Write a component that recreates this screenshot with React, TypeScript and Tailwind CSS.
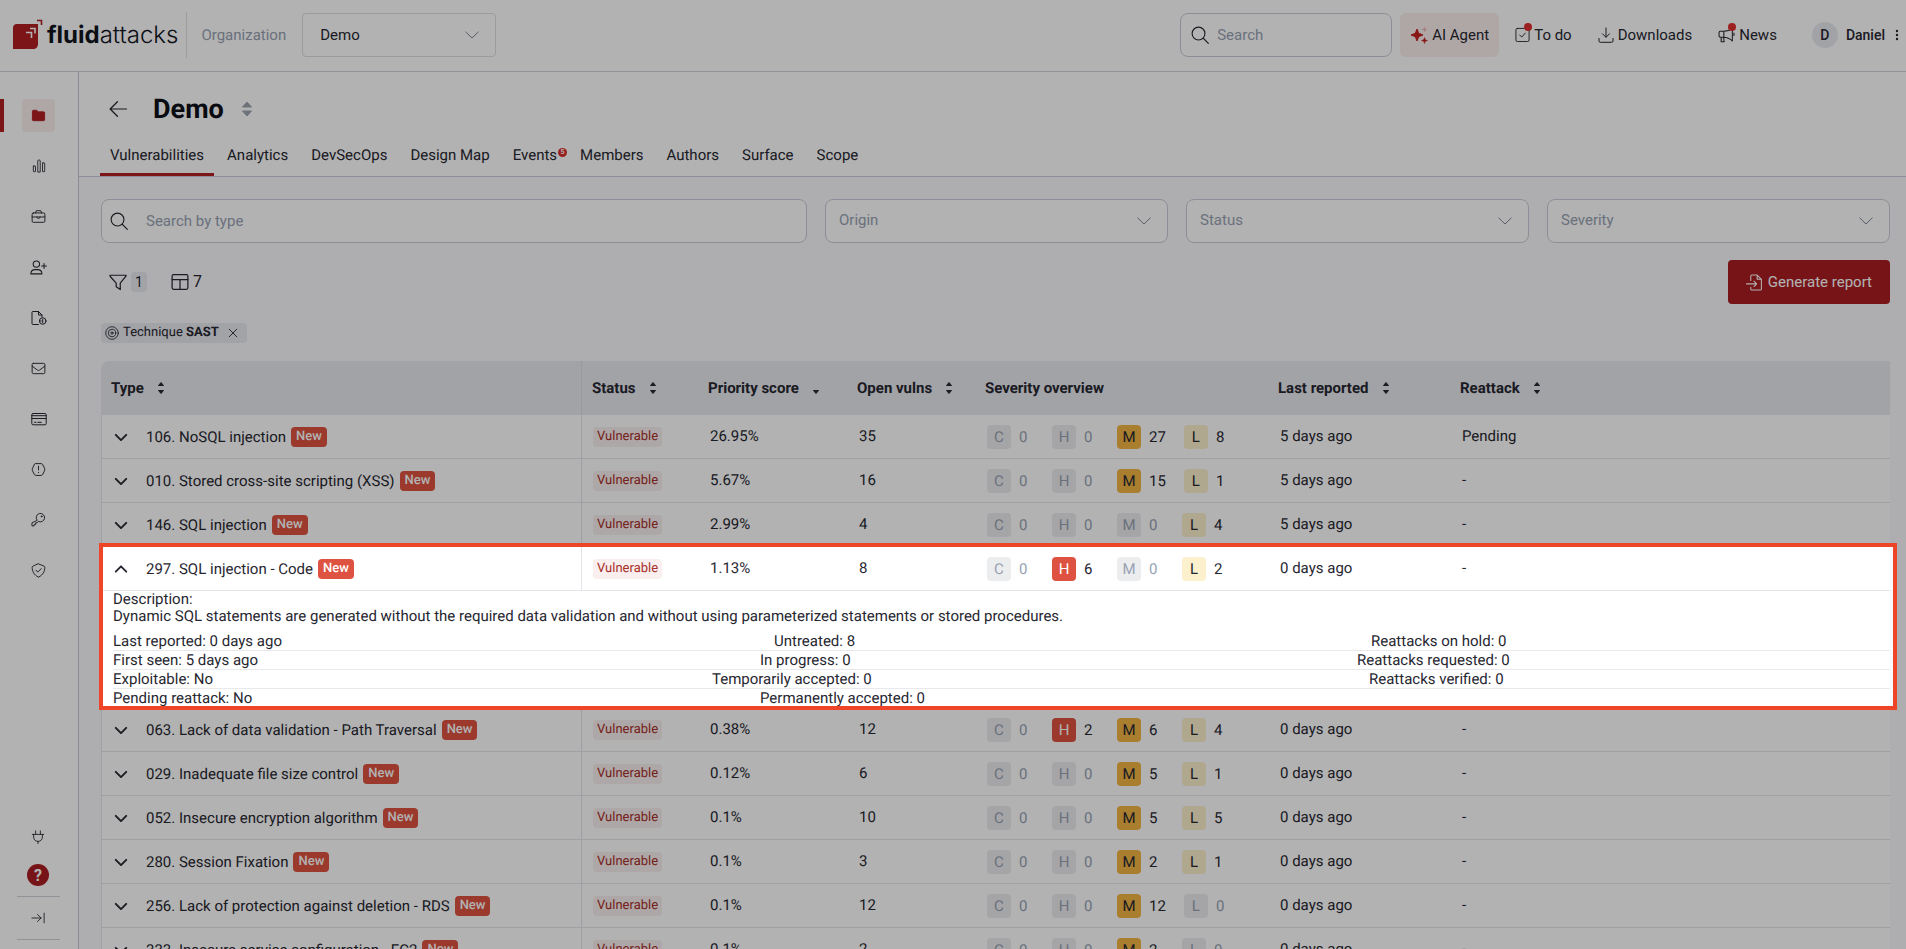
import type { ReactNode } from "react";

function Icon({ size = 16, width = 1, children }: { size?: number; width?: number; children: ReactNode }) {
  return (
    <svg
      width={size}
      height={size}
      viewBox="0 0 16 16"
      fill="none"
      stroke="currentColor"
      strokeWidth={width}
      strokeLinecap="round"
      strokeLinejoin="round"
      aria-hidden="true"
      className="shrink-0"
    >
      {children}
    </svg>
  );
}

const navItems: { label: string; icon: ReactNode }[] = [
  {
    label: "Groups",
    icon: (
      <Icon size={15}>
        <path d="M1.5 12.5v-9c0-.6.4-1 1-1H6l1.8 1.6H13.5c.6 0 1 .4 1 1v7.4c0 .6-.4 1-1 1h-11c-.6 0-1-.4-1-1z" fill="currentColor" />
      </Icon>
    ),
  },
  {
    label: "Analytics",
    icon: (
      <Icon size={14}>
        <rect x="1.5" y="8" width="2.5" height="6.5" rx=".5" />
        <path d="M6.6 14.5V2c0-.4.3-.7.7-.7h1.4c.4 0 .7.3.7.7v12.500z" />
        <rect x="12" y="4.500" width="2.5" height="10" rx=".5" />
      </Icon>
    ),
  },
  {
    label: "Portfolios",
    icon: (
      <Icon size={15}>
        <rect x="1.200" y="4.200" width="13.600" height="10" rx="1.300" />
        <path d="M4.800 4.200l.8-2.400h4.800l.8 2.400M1.200 8.500h13.600M6.300 8.500c0 2.400 3.400 2.400 3.400 0" />
      </Icon>
    ),
  },
  {
    label: "Members",
    icon: (
      <Icon size={17}>
        <circle cx="6" cy="4.800" r="3" />
        <path d="M.8 14c0-2.600 1.800-4 4-4h2.400c2.200 0 4 1.400 4 4zM13.200 4.200v4.600M10.900 6.500h4.600" />
      </Icon>
    ),
  },
  {
    label: "Policies",
    icon: (
      <Icon size={16}>
        <path d="M7.500 14.500H1.800c-.5 0-.8-.3-.8-.8V2.300c0-.5.3-.8.8-.8h5.700L11 5v2M7.500 1.500V5H11" />
        <circle cx="11.700" cy="11" r="3.300" />
        <path d="M11.700 9.200v3.600M9.200 11h1" />
      </Icon>
    ),
  },
  {
    label: "Outside",
    icon: (
      <Icon size={15}>
        <rect x="1.200" y="2.500" width="13.600" height="11" rx="1.300" />
        <path d="M1.300 5.500l5.300 4c.9.700 1.900.700 2.800 0l5.300-4" />
      </Icon>
    ),
  },
  {
    label: "Billing",
    icon: (
      <Icon size={16}>
        <rect x=".8" y="2.500" width="14.400" height="11.300" rx="1.300" />
        <path d="M.8 4.700h14.400M.8 7.500h14.400M3.500 11.300h1.500M6.800 11.300h3.500" />
      </Icon>
    ),
  },
  {
    label: "Compliance",
    icon: (
      <Icon size={15}>
        <path d="M5 1.700h6l1.400.8 2.200 4.600v1.800l-2.200 4.600-1.400.8H5l-1.400-.8L1.400 8.900V7.100l2.200-4.600zM8 4.500v4M8 11v.3" />
      </Icon>
    ),
  },
  {
    label: "Credentials",
    icon: (
      <Icon size={15}>
        <path d="M6.300 8.600A4.500 4.500 0 1 1 7.900 10L6.600 11.500H5v1.700H3.400v1.600H1V12z" />
        <circle cx="11.300" cy="4.700" r=".5" />
      </Icon>
    ),
  },
  {
    label: "Security",
    icon: (
      <Icon size={15}>
        <path d="M8 .9l6 2.500c.5.200.8.600.8 1.200-.1 4.200-1.800 8-6.800 10.500C3 12.600 1.300 8.800 1.200 4.600c0-.6.3-1 .8-1.200zM5.200 7.700l2 2 3.700-3.700" />
      </Icon>
    ),
  },
];

const SearchIcon = () => (
  <Icon size={18}>
    <circle cx="6.700" cy="6.700" r="5.700" />
    <path d="M10.900 10.900l4.500 4.500" />
  </Icon>
);

const Chevron = () => (
  <Icon size={16} width={1}>
    <path d="M1.800 5l6.200 6 6.200-6" />
  </Icon>
);

function SortIcon({ mode = "both" }: { mode?: "both" | "down" }) {
  return (
    <svg width="8" height="14" viewBox="0 0 8 14" fill="currentColor" stroke="currentColor" strokeLinejoin="round" aria-hidden="true" className="shrink-0">
      {mode === "both" && <path d="M4 1.500L6.500 4.500h-5z" />}
      <path d="M4 12.500L1.500 9.500h5z" />
    </svg>
  );
}

function Logo() {
  return (
    <a href="#home" className="flex items-center gap-1">
      <svg width="31" height="32" viewBox="0 0 31 32" aria-hidden="true" className="shrink-0">
        <path d="M5 5h21v20c0 3-2 5-5 5H1V9c0-2.500 1.500-4 4-4z" fill="#b01f22" />
        <path d="M14 13.500h5.500V19M18 9.500h5v5" fill="none" stroke="#fff" strokeWidth="1.600" />
        <path d="M25 1.500h4.500V6" fill="none" stroke="#b01f22" strokeWidth="1.600" />
      </svg>
      <span className="font-['Inter',sans-serif] text-2xl leading-8 text-[#10151f]">
        <span className="font-bold">fluid</span>
        <span className="font-light">attacks</span>
      </span>
    </a>
  );
}

const topButton = "relative flex h-11 items-center gap-1 rounded-md px-2.5";

function Header() {
  return (
    <header className="flex h-[72px] shrink-0 items-center justify-between border-b border-[#d0d3da] bg-white pr-[5px] pb-0.5 pl-3">
      <div className="flex items-center">
        <Logo />
        <div className="ml-2 h-[46px] w-px bg-[#e0e1e7]" />
        <label htmlFor="organization" className="ml-3.5 text-[#98a2b3]">
          Organization
        </label>
        <div className="relative ml-4">
          <select id="organization" className="h-11 w-[194px] appearance-none rounded border border-[#dddee4] bg-white pl-[17px]">
            <option>Demo</option>
          </select>
          <span className="pointer-events-none absolute top-3.5 right-4 text-[#7d8595]">
            <Chevron />
          </span>
        </div>
      </div>
      <div className="flex items-center">
        <label className="flex h-11 w-[212px] items-center gap-2 rounded-lg border border-[#c9ccd6] px-2.5">
          <SearchIcon />
          <input aria-label="Search" placeholder="Search" className="w-full min-w-0 outline-none placeholder:text-[#98a2b3]" />
        </label>
        <nav className="ml-2 flex items-center gap-1.5">
          <button className={"relative flex h-11 items-center gap-1 rounded-md bg-[#fbeeee] px-2.5"}>
            <svg width="18" height="18" viewBox="0 0 18 18" fill="#c4211f" aria-hidden="true">
              <path d="M7 3l1.700 4.300L13 9l-4.300 1.700L7 15l-1.700-4.300L1 9l4.300-1.700z" stroke="#c4211f" />
              <path d="M14.500 11.500l.8 2.200 2.200.8-2.200.8-.8 2.200-.8-2.200-2.200-.8 2.200-.8z" stroke="#c4211f" strokeWidth=".5" />
              <path d="M14.500.5l.8 2.200 2.200.8-2.200.8-.8 2.200-.8-2.200-2.200-.8 2.200-.8z" fill="#eeb5b2" />
            </svg>
            AI Agent
          </button>
          <button className={topButton}>
            <Icon size={15}>
              <rect x="1" y="1.500" width="14" height="14" rx="1.500" />
              <path d="M5 8.500l2.200 2.300L11 6.500" />
            </Icon>
            To do
            <span className="absolute top-2.5 left-[19px] size-2 rounded-full bg-[#e0302f]" />
          </button>
          <button className={topButton}>
            <Icon size={16}>
              <path d="M8 1v9M4.500 6.800L8 10.300l3.500-3.500M1 11.500V14c0 .8.500 1.300 1.300 1.300h11.400c.8 0 1.300-.5 1.300-1.300v-2.500" />
            </Icon>
            Downloads
          </button>
          <button className={topButton}>
            <Icon size={17}>
              <path d="M13.500 2v12C11 11.600 8.500 10.500 5.500 10.500H2.200c-.7 0-1.200-.5-1.200-1.200V6.200C1 5.500 1.500 5 2.200 5h3.300c3 0 5.500-.8 8-3zM3 10.500v4.300h2.800l-.6-4.300M5.500 5v5.500M15 6.500v2.500" />
            </Icon>
            News
            <span className="absolute top-2.5 left-5 size-2 rounded-full bg-[#e0302f]" />
          </button>
        </nav>
        <button className="ml-[25px] flex items-center gap-2 text-sm font-medium">
          <span className="grid size-[26px] place-items-center rounded-full bg-[#e9eaf0]">D</span>
          Daniel
          <svg width="8" height="14" viewBox="0 0 8 14" fill="currentColor" aria-hidden="true">
            <circle cx="4" cy="3" r="1.200" />
            <circle cx="4" cy="7" r="1.200" />
            <circle cx="4" cy="11" r="1.200" />
          </svg>
        </button>
      </div>
    </header>
  );
}

function Sidebar() {
  return (
    <aside className="flex w-[79px] shrink-0 flex-col justify-between border-r border-[#c3c9d6] bg-white pt-[27px]">
      <nav className="flex h-[488px] flex-col justify-between">
        {navItems.map((item, i) => (
          <div key={item.label} className={i === 0 ? "flex border-l-4 border-[#b01f22] pl-[18px]" : "flex pl-[22px]"}>
            <button
              aria-label={item.label}
              className={i === 0 ? "grid size-[33px] place-items-center rounded bg-[#fbeeee] text-[#b01f22]" : "grid size-[33px] place-items-center"}
            >
              {item.icon}
            </button>
          </div>
        ))}
      </nav>
      <div className="flex flex-col items-center pr-0.5 pb-[9px]">
        <button aria-label="Integrations" className="grid size-8 place-items-center">
          <Icon size={14}>
            <path d="M5.300 1v4M10.700 1v4M1.500 5h13M3 5v3c0 3 2 5 5 5s5-2 5-5V5M8 13v2.500" />
          </Icon>
        </button>
        <button aria-label="Help" className="mt-[11px] grid size-[22px] place-items-center rounded-full bg-[#ab1e22] text-base font-bold text-white">
          ?
        </button>
        <hr className="mt-2.5 w-[43px] border-[#d0d3da]" />
        <button aria-label="Expand menu" className="grid h-[42px] w-10 place-items-center">
          <Icon size={14}>
            <path d="M1 8h10.500M7.500 4l4 4-4 4M15 2.500v11" />
          </Icon>
        </button>
        <hr className="w-[43px] border-[#d0d3da]" />
      </div>
    </aside>
  );
}

const tabs = ["Vulnerabilities", "Analytics", "DevSecOps", "Design Map", "Events", "Members", "Authors", "Surface", "Scope"];

function TitleBar() {
  return (
    <div className="border-b border-[#c9cdd8] bg-white pt-[19px] pl-[21px]">
      <div className="flex h-9 items-center pl-[9px]">
        <button aria-label="Back">
          <Icon size={18} width={1.1}>
            <path d="M15.500 8H1M7.500 1.500L1 8l6.500 6.500" />
          </Icon>
        </button>
        <h1 className="ml-[26px] text-[27px] leading-9 font-bold text-[#0d1018]">Demo</h1>
        <button aria-label="Switch group" className="ml-4 text-[#9ea4b1]">
          <svg width="14" height="18" viewBox="0 0 14 18" fill="currentColor" stroke="currentColor" strokeLinejoin="round" aria-hidden="true">
            <path d="M7 2l4.500 5h-9z" />
            <path d="M7 16l4.500-5h-9z" />
          </svg>
        </button>
      </div>
      <nav className="mt-1.5 flex gap-[3px]">
        {tabs.map((tab, i) => (
          <a
            key={tab}
            href={"#" + tab}
            className={
              i === 0
                ? "relative h-[43px] border-b-3 border-[#b01f22] px-2.5 pt-2.5 leading-6"
                : "relative h-[43px] px-2.5 pt-2.5 leading-6"
            }
          >
            {tab}
            {tab === "Events" && (
              <span className="absolute top-[15px] right-0 grid size-[9px] place-items-center rounded-full bg-[#d92d2a] text-[7px] leading-none font-bold text-white">
                5
              </span>
            )}
          </a>
        ))}
      </nav>
    </div>
  );
}

function Filters() {
  return (
    <>
      <div className="grid grid-cols-[706fr_343fr_343fr_343fr] gap-[18px]">
        <label className="flex h-11 items-center gap-[18px] rounded-lg border border-[#c9cdd8] bg-white px-2">
          <SearchIcon />
          <input aria-label="Search by type" placeholder="Search by type" className="w-full outline-none placeholder:text-[#98a2b3]" />
        </label>
        {["Origin", "Status", "Severity"].map((name) => (
          <div key={name} className="relative">
            <select aria-label={name} className="h-11 w-full appearance-none rounded-lg border border-[#c9cdd8] bg-white px-[13px] pb-0.5 text-[#98a2b3]">
              <option>{name}</option>
            </select>
            <span className="pointer-events-none absolute top-3.5 right-4 text-[#7d8595]">
              <Chevron />
            </span>
          </div>
        ))}
      </div>
      <div className="mt-[17px] flex items-center justify-between">
        <div className="flex items-center pl-2">
          <button aria-label="Filters" className="flex items-center gap-1">
            <Icon size={18} width={1.1}>
              <path d="M.8 2h14.400c0 .5-.2 1-.5 1.300L10 9v5.700L6.400 12.200V9L1.300 3.300C1 3 .8 2.500.8 2z" />
            </Icon>
            <span className="grid h-5 w-4 place-items-center rounded bg-[#e9eaf0] text-sm">1</span>
          </button>
          <button aria-label="Columns" className="ml-6 flex items-center gap-1 text-base">
            <Icon size={18} width={1.1}>
              <rect x="1" y="1.500" width="14" height="13" rx="1.300" />
              <path d="M1 5.800h14M8 5.800v8.700" />
            </Icon>
            7
          </button>
        </div>
        <button className="flex h-11 items-center gap-[5px] rounded bg-[#ab1e22] px-[18px] text-white">
          <Icon size={17}>
            <path d="M4.500 6V2c0-.6.4-1 1-1h5L14.500 5v9c0 .6-.4 1-1 1h-8c-.6 0-1-.4-1-1v-1.500M10.500 1v4h4M.5 9.300h9.500M7.500 6.800l2.500 2.500-2.500 2.500" />
          </Icon>
          Generate report
        </button>
      </div>
      <div className="mt-[19px] mb-[18px] flex h-5 w-fit items-center gap-1 rounded bg-[#e9eaf0] px-1 text-[13px]">
        <Icon size={14}>
          <circle cx="8" cy="8" r="7.200" />
          <circle cx="8" cy="8" r="4.300" />
          <circle cx="8" cy="8" r="1.300" />
        </Icon>
        <span>
          Technique <b>SAST</b>
        </span>
        <button aria-label="Remove filter" className="px-1">
          <Icon size={12} width={1.2}>
            <path d="M3 3l10 10M13 3L3 13" />
          </Icon>
        </button>
      </div>
    </>
  );
}

interface Finding {
  name: string;
  score: string;
  open: number;
  severity: [number, number, number, number];
  reported: string;
  reattack: string;
}

const findings: Finding[] = [
  { name: "106. NoSQL injection", score: "26.95%", open: 35, severity: [0, 0, 27, 8], reported: "5 days ago", reattack: "Pending" },
  { name: "010. Stored cross-site scripting (XSS)", score: "5.67%", open: 16, severity: [0, 0, 15, 1], reported: "5 days ago", reattack: "-" },
  { name: "146. SQL injection", score: "2.99%", open: 4, severity: [0, 0, 0, 4], reported: "5 days ago", reattack: "-" },
];

const selected: Finding = { name: "297. SQL injection - Code", score: "1.13%", open: 8, severity: [0, 6, 0, 2], reported: "0 days ago", reattack: "-" };

const moreFindings: Finding[] = [
  { name: "063. Lack of data validation - Path Traversal", score: "0.38%", open: 12, severity: [0, 2, 6, 4], reported: "0 days ago", reattack: "-" },
  { name: "029. Inadequate file size control", score: "0.12%", open: 6, severity: [0, 0, 5, 1], reported: "0 days ago", reattack: "-" },
  { name: "052. Insecure encryption algorithm", score: "0.1%", open: 10, severity: [0, 0, 5, 5], reported: "0 days ago", reattack: "-" },
  { name: "280. Session Fixation", score: "0.1%", open: 3, severity: [0, 0, 2, 1], reported: "0 days ago", reattack: "-" },
  { name: "256. Lack of protection against deletion - RDS", score: "0.1%", open: 12, severity: [0, 0, 12, 0], reported: "0 days ago", reattack: "-" },
  { name: "333. Insecure service configuration - EC2", score: "0.1%", open: 2, severity: [0, 0, 2, 0], reported: "0 days ago", reattack: "-" },
];

const levels = [
  { letter: "C", active: "bg-[#b01f22] text-white" },
  { letter: "H", active: "bg-[#de5241] text-white" },
  { letter: "M", active: "bg-[#f3b544]" },
  { letter: "L", active: "bg-[#fdf0cd]" },
];

const cell = "h-11 border-b border-[#e4e5ea] px-3 pb-0.5";

function Row({ finding, open = false }: { finding: Finding; open?: boolean }) {
  return (
    <tr className="bg-white">
      <td className="h-11 border-b border-l border-[#e4e5ea] pl-3">
        <div className="flex items-center">
          <button aria-label={open ? "Collapse" : "Expand"} aria-expanded={open}>
            <Icon size={14} width={2.2}>
              <path d={open ? "M2 11l6-6 6 6" : "M2 5.500l6 6 6-6"} />
            </Icon>
          </button>
          <span className="ml-[18px]">{finding.name}</span>
          <span className="ml-[5px] h-5 rounded bg-[#de5241] px-[5px] text-[13px] leading-5 font-medium text-white">New</span>
        </div>
      </td>
      <td className="border-b border-l border-[#e4e5ea] px-[11px]">
        <span className="block w-fit rounded bg-[#f9efef] px-1 text-[13px] leading-5 text-[#a8302a]">Vulnerable</span>
      </td>
      <td className={cell}>{finding.score}</td>
      <td className={cell}>{finding.open}</td>
      <td className="border-b border-[#e4e5ea] px-3">
        <div className="flex items-center gap-[18px]">
          {levels.map((level, i) => {
            const count = finding.severity[i];
            return (
              <span key={level.letter} className={count ? "flex items-center gap-2" : "flex items-center gap-2 text-[#98a2b3]"}>
                <span className={"grid size-6 place-items-center rounded " + (count ? level.active : "bg-[#ecedef]")}>{level.letter}</span>
                <span className="min-w-[15px]">{count}</span>
              </span>
            );
          })}
        </div>
      </td>
      <td className={cell}>{finding.reported}</td>
      <td className={cell}>{finding.reattack}</td>
    </tr>
  );
}

function Details() {
  const line = "grid h-[19px] grid-cols-[599fr_645fr_533fr] border-b border-[#e8e9ec] leading-[18px]";
  return (
    <div className="h-[117px] pl-[11px] leading-[17px]">
      <p>Description:</p>
      <p className="mb-[7px]">
        Dynamic SQL statements are generated without the required data validation and without using parameterized statements or stored procedures.
      </p>
      <div className={line}>
        <span>Last reported: 0 days ago</span>
        <span className="pl-[62px]">Untreated: 8</span>
        <span className="pl-3.5">Reattacks on hold: 0</span>
      </div>
      <div className={line}>
        <span>First seen: 5 days ago</span>
        <span className="pl-12">In progress: 0</span>
        <span>Reattacks requested: 0</span>
      </div>
      <div className={line}>
        <span>Exploitable: No</span>
        <span>Temporarily accepted: 0</span>
        <span className="pl-3">Reattacks verified: 0</span>
      </div>
      <div className="grid h-[18px] grid-cols-[599fr_645fr_533fr] leading-[18px]">
        <span>Pending reattack: No</span>
        <span className="pl-12">Permanently accepted: 0</span>
      </div>
    </div>
  );
}

const columns: { title: string; sort?: "both" | "down"; width: string }[] = [
  { title: "Type", sort: "both", width: "w-[480px] rounded-tl-lg" },
  { title: "Status", sort: "both", width: "w-[117px] border-l border-[#dcdde5]" },
  { title: "Priority score", sort: "down", width: "w-[149px]" },
  { title: "Open vulns", sort: "both", width: "w-[128px]" },
  { title: "Severity overview", width: "w-[293px]" },
  { title: "Last reported", sort: "both", width: "w-[182px]" },
  { title: "Reattack", sort: "both", width: "" },
];

function FindingsTable() {
  return (
    <table className="w-full table-fixed border-separate border-spacing-0">
      <thead>
        <tr>
          {columns.map((column) => (
            <th key={column.title} className={"h-[54px] bg-[#e9eaf0] pl-2.5 text-left font-bold whitespace-nowrap " + column.width}>
              <span className="flex items-center gap-[13px]">
                {column.title}
                {column.sort && <SortIcon mode={column.sort} />}
              </span>
            </th>
          ))}
        </tr>
      </thead>
      <tbody>
        {findings.map((finding) => (
          <Row key={finding.name} finding={finding} />
        ))}
      </tbody>
      <tbody className="relative">
        <Row finding={selected} open />
        <tr className="bg-white">
          <td colSpan={7} className="border-l border-[#e4e5ea] p-0">
            <Details />
            <div className="pointer-events-none absolute -top-1 -right-[7px] -bottom-0.5 -left-0.5 z-50 border-4 border-[#ee4427] shadow-[0_0_0_3000px_rgba(0,0,0,0.3)]" />
          </td>
        </tr>
      </tbody>
      <tbody>
        {moreFindings.map((finding) => (
          <Row key={finding.name} finding={finding} />
        ))}
      </tbody>
    </table>
  );
}

export default function App() {
  return (
    <div className="flex h-screen flex-col overflow-hidden bg-[#f9fafc] font-['Roboto',sans-serif] text-[15px] leading-6 text-[#272731] [text-rendering:geometricPrecision]">
      <Header />
      <div className="flex min-h-0 flex-1">
        <Sidebar />
        <main className="min-w-0 flex-1">
          <TitleBar />
          <section className="pt-[22px] pr-4 pl-[22px]">
            <Filters />
            <FindingsTable />
          </section>
        </main>
      </div>
    </div>
  );
}
